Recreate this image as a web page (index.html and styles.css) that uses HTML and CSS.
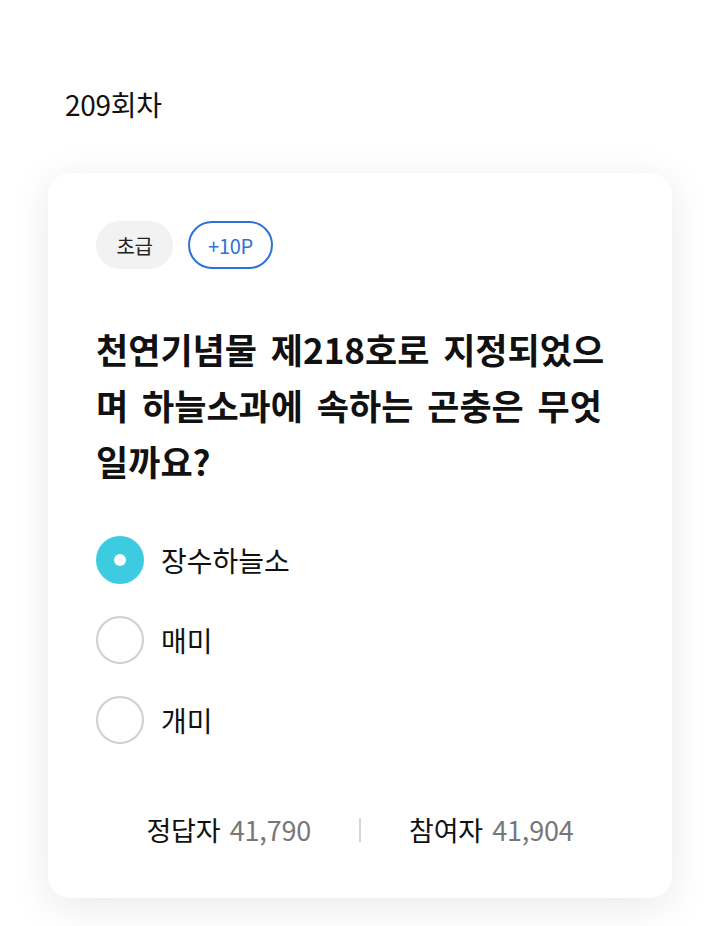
FILE: index.html
```html
<!DOCTYPE html>
<html lang="ko">
<head>
<meta charset="utf-8">
<link rel="stylesheet" href="styles.css">
</head>
<body>
<div class="page">
  <h1 class="round">209회차</h1>
  <section class="card">
    <div class="tags">
      <span class="tag tag-level">초급</span>
      <span class="tag tag-point">+10P</span>
    </div>
    <p class="question">천연기념물 제218호로 지정되었으며 하늘소과에 속하는 곤충은 무엇일까요?</p>
    <ul class="options">
      <li class="option selected"><span class="radio"></span><span class="label">장수하늘소</span></li>
      <li class="option"><span class="radio"></span><span class="label">매미</span></li>
      <li class="option"><span class="radio"></span><span class="label">개미</span></li>
    </ul>
    <div class="stats">
      <div class="stat"><span class="stat-name">정답자</span> <span class="stat-num">41,790</span></div>
      <span class="divider"></span>
      <div class="stat"><span class="stat-name">참여자</span> <span class="stat-num">41,904</span></div>
    </div>
  </section>
</div>
</body>
</html>
```
FILE: styles.css
```css
* { box-sizing: border-box; }
html, body { margin: 0; padding: 0; background: #fff; }
body {
  font-family: "Noto Sans CJK KR", "Noto Sans", sans-serif;
  color: #111;
  width: 720px;
  height: 926px;
  overflow: hidden;
}
.page { padding: 84px 48px 0; }
.round {
  margin: 0 0 0 17px;
  font-size: 28px;
  font-weight: 400;
  line-height: 40px;
  letter-spacing: -0.3px;
  color: #111;
}
.card {
  margin-top: 49px;
  background: #fff;
  border-radius: 22px;
  box-shadow: 0 8px 40px rgba(0,0,0,0.09);
  padding: 48px 48px 40px;
  height: 725px;
}
.tags { display: flex; gap: 15px; }
.tag {
  display: inline-flex;
  align-items: center;
  justify-content: center;
  height: 48px;
  border-radius: 24px;
  font-size: 20px;
  letter-spacing: -0.3px;
}
.tag-level { background: #f2f2f2; color: #222; width: 77px; }
.tag-point { border: 2px solid #2d72d9; color: #2d72d9; width: 85px; }
.question {
  margin: 52px 0 0;
  font-size: 35px;
  font-weight: 700;
  line-height: 56px;
  word-break: break-all;
  letter-spacing: 0;
  word-spacing: 4px;
  color: #111;
}
.options { list-style: none; margin: 47px 0 0; padding: 0; display: flex; flex-direction: column; gap: 32px; }
.option { display: flex; align-items: center; gap: 17px; height: 48px; }
.radio {
  width: 48px; height: 48px; border-radius: 50%;
  border: 2px solid #cfcfcf; background: #fff; flex: none;
  position: relative;
}
.selected .radio { border: none; background: #3ccbe0; }
.selected .radio::after {
  content: ""; position: absolute; left: 50%; top: 50%;
  width: 12px; height: 12px; margin: -6px 0 0 -6px;
  border-radius: 50%; background: #fff;
}
.label { font-size: 28px; letter-spacing: 0; color: #111; }
.stats {
  margin-top: 66px;
  display: flex; align-items: center; justify-content: center;
  gap: 48px;
  font-size: 27px; line-height: 40px; letter-spacing: -0.2px; word-spacing: 2px;
}
.stat-name { color: #111; }
.stat-num { color: #777; }
.divider { width: 2px; height: 24px; background: #d5d5d5; }
```
